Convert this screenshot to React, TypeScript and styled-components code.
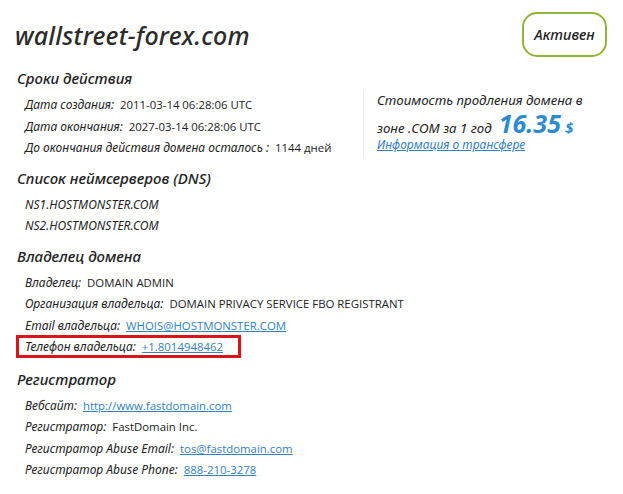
import React from "react";
import styled, { createGlobalStyle } from "styled-components";

const Global = createGlobalStyle`
  html, body { margin: 0; padding: 0; background: #fff; }
  body { font-family: "Open Sans", "Noto Sans", sans-serif; color: #222; }
`;

const Page = styled.div`
  width: 623px;
  height: 494px;
  box-sizing: border-box;
  padding: 12px 15px 0 15px;
`;

const Header = styled.div`
  display: flex;
  justify-content: space-between;
  align-items: center;
  height: 46px;
`;

const Title = styled.h1`
  margin: 0;
  font-family: "Noto Sans", sans-serif;
  font-style: italic;
  font-weight: 500;
  font-size: 25px;
  color: #2b2b2b;
  letter-spacing: 0.2px;
`;

const Badge = styled.div`
  box-sizing: border-box;
  width: 85px;
  height: 45px;
  margin-top: -2px;
  margin-right: 1px;
  border: 2.5px solid #8fb53a;
  border-radius: 15px;
  display: flex;
  align-items: center;
  justify-content: center;
  font-family: "Noto Sans", sans-serif;
  font-style: italic;
  font-weight: 500;
  font-size: 14.5px;
  color: #1e1e1e;
`;

const SectionTitle = styled.h2`
  margin: 0;
  padding-left: 2px;
  font-family: "Noto Sans", sans-serif;
  font-style: italic;
  font-weight: 500;
  font-size: 15px;
  line-height: 20px;
  color: #222;
`;

const Section = styled.section<{ $top: number }>`
  margin-top: ${(p) => p.$top}px;
`;

const Rows = styled.div`
  padding-left: 10px;
  padding-top: 6px;
  display: flex;
  flex-direction: column;
`;

const Row = styled.div`
  height: 21.5px;
  display: flex;
  align-items: center;
  white-space: nowrap;
  font-size: 12px;
`;

const Label = styled.span`
  font-family: "Noto Sans", sans-serif;
  font-style: italic;
  font-size: 12px;
  color: #222;
  margin-right: 6px;
`;

const Value = styled.span`
  font-family: "Open Sans", sans-serif;
  font-size: 11.4px;
  color: #222;
`;

const Link = styled.a`
  font-family: "Open Sans", sans-serif;
  font-size: 11.4px;
  color: #3380c2;
  text-decoration: underline;
`;

const NS = styled.span`
  font-family: "Noto Sans", sans-serif;
  font-style: italic;
  font-size: 12px;
  color: #222;
`;

const Split = styled.div`
  display: grid;
  grid-template-columns: 348px 1fr;
  align-items: start;
`;

const PriceBox = styled.div`
  box-sizing: border-box;
  border-left: 1px solid #ececec;
  padding-left: 13px;
  margin-top: 3px;
  height: 66px;
  display: flex;
  flex-direction: column;
  font-family: "Noto Sans", sans-serif;
  font-style: italic;
  font-size: 13.3px;
  color: #222;
`;

const PriceLine = styled.div<{ $first?: boolean }>`
  height: 23px;
  line-height: 23px;
  margin-top: ${(p) => (p.$first ? -2 : 0)}px;
  white-space: nowrap;
  display: flex;
  align-items: baseline;
`;

const Price = styled.span`
  font-family: "Noto Sans", sans-serif;
  font-style: italic;
  font-weight: 700;
  font-size: 25px;
  line-height: 23px;
  color: #2e8ad0;
  margin-left: 7px;
`;

const Currency = styled.span`
  font-weight: 700;
  font-size: 15px;
  color: #2e8ad0;
  margin-left: 4px;
`;

const InfoLink = styled.a`
  margin-top: 2px;
  font-size: 12px;
  color: #3380c2;
  text-decoration: underline;
  line-height: 16px;
`;

const Highlight = styled.div`
  box-sizing: border-box;
  margin-left: -9px;
  width: 225px;
  height: 23px;
  border: 3px solid #d7151b;
  padding-left: 6px;
  display: flex;
  align-items: center;
  white-space: nowrap;
`;

export default function App() {
  return (
    <Page>
      <Global />
      <Header>
        <Title>wallstreet-forex.com</Title>
        <Badge>Активен</Badge>
      </Header>

      <Section $top={10}>
        <SectionTitle>Сроки действия</SectionTitle>
        <Split>
          <Rows>
            <Row>
              <Label>Дата создания:</Label>
              <Value>2011-03-14 06:28:06 UTC</Value>
            </Row>
            <Row>
              <Label>Дата окончания:</Label>
              <Value>2027-03-14 06:28:06 UTC</Value>
            </Row>
            <Row>
              <Label>До окончания действия домена осталось :</Label>
              <Value>1144 дней</Value>
            </Row>
          </Rows>
          <PriceBox>
            <PriceLine $first>Стоимость продления домена в</PriceLine>
            <PriceLine>
              зоне .COM за 1 год<Price>16.35</Price>
              <Currency>$</Currency>
            </PriceLine>
            <InfoLink href="#">Информация о трансфере</InfoLink>
          </PriceBox>
        </Split>
      </Section>

      <Section $top={9}>
        <SectionTitle>Список неймсерверов (DNS)</SectionTitle>
        <Rows>
          <Row>
            <NS>NS1.HOSTMONSTER.COM</NS>
          </Row>
          <Row>
            <NS>NS2.HOSTMONSTER.COM</NS>
          </Row>
        </Rows>
      </Section>

      <Section $top={9}>
        <SectionTitle>Владелец домена</SectionTitle>
        <Rows>
          <Row>
            <Label>Владелец:</Label>
            <Value>DOMAIN ADMIN</Value>
          </Row>
          <Row>
            <Label>Организация владельца:</Label>
            <Value>DOMAIN PRIVACY SERVICE FBO REGISTRANT</Value>
          </Row>
          <Row>
            <Label>Email владельца:</Label>
            <Link href="#">WHOIS@HOSTMONSTER.COM</Link>
          </Row>
          <Row>
            <Highlight>
              <Label>Телефон владельца:</Label>
              <Link href="#">+1.8014948462</Link>
            </Highlight>
          </Row>
        </Rows>
      </Section>

      <Section $top={11}>
        <SectionTitle>Регистратор</SectionTitle>
        <Rows>
          <Row>
            <Label>Вебсайт:</Label>
            <Link href="#">http://www.fastdomain.com</Link>
          </Row>
          <Row>
            <Label>Регистратор:</Label>
            <Value>FastDomain Inc.</Value>
          </Row>
          <Row>
            <Label>Регистратор Abuse Email:</Label>
            <Link href="#">tos@fastdomain.com</Link>
          </Row>
          <Row>
            <Label>Регистратор Abuse Phone:</Label>
            <Link href="#">888-210-3278</Link>
          </Row>
        </Rows>
      </Section>
    </Page>
  );
}
